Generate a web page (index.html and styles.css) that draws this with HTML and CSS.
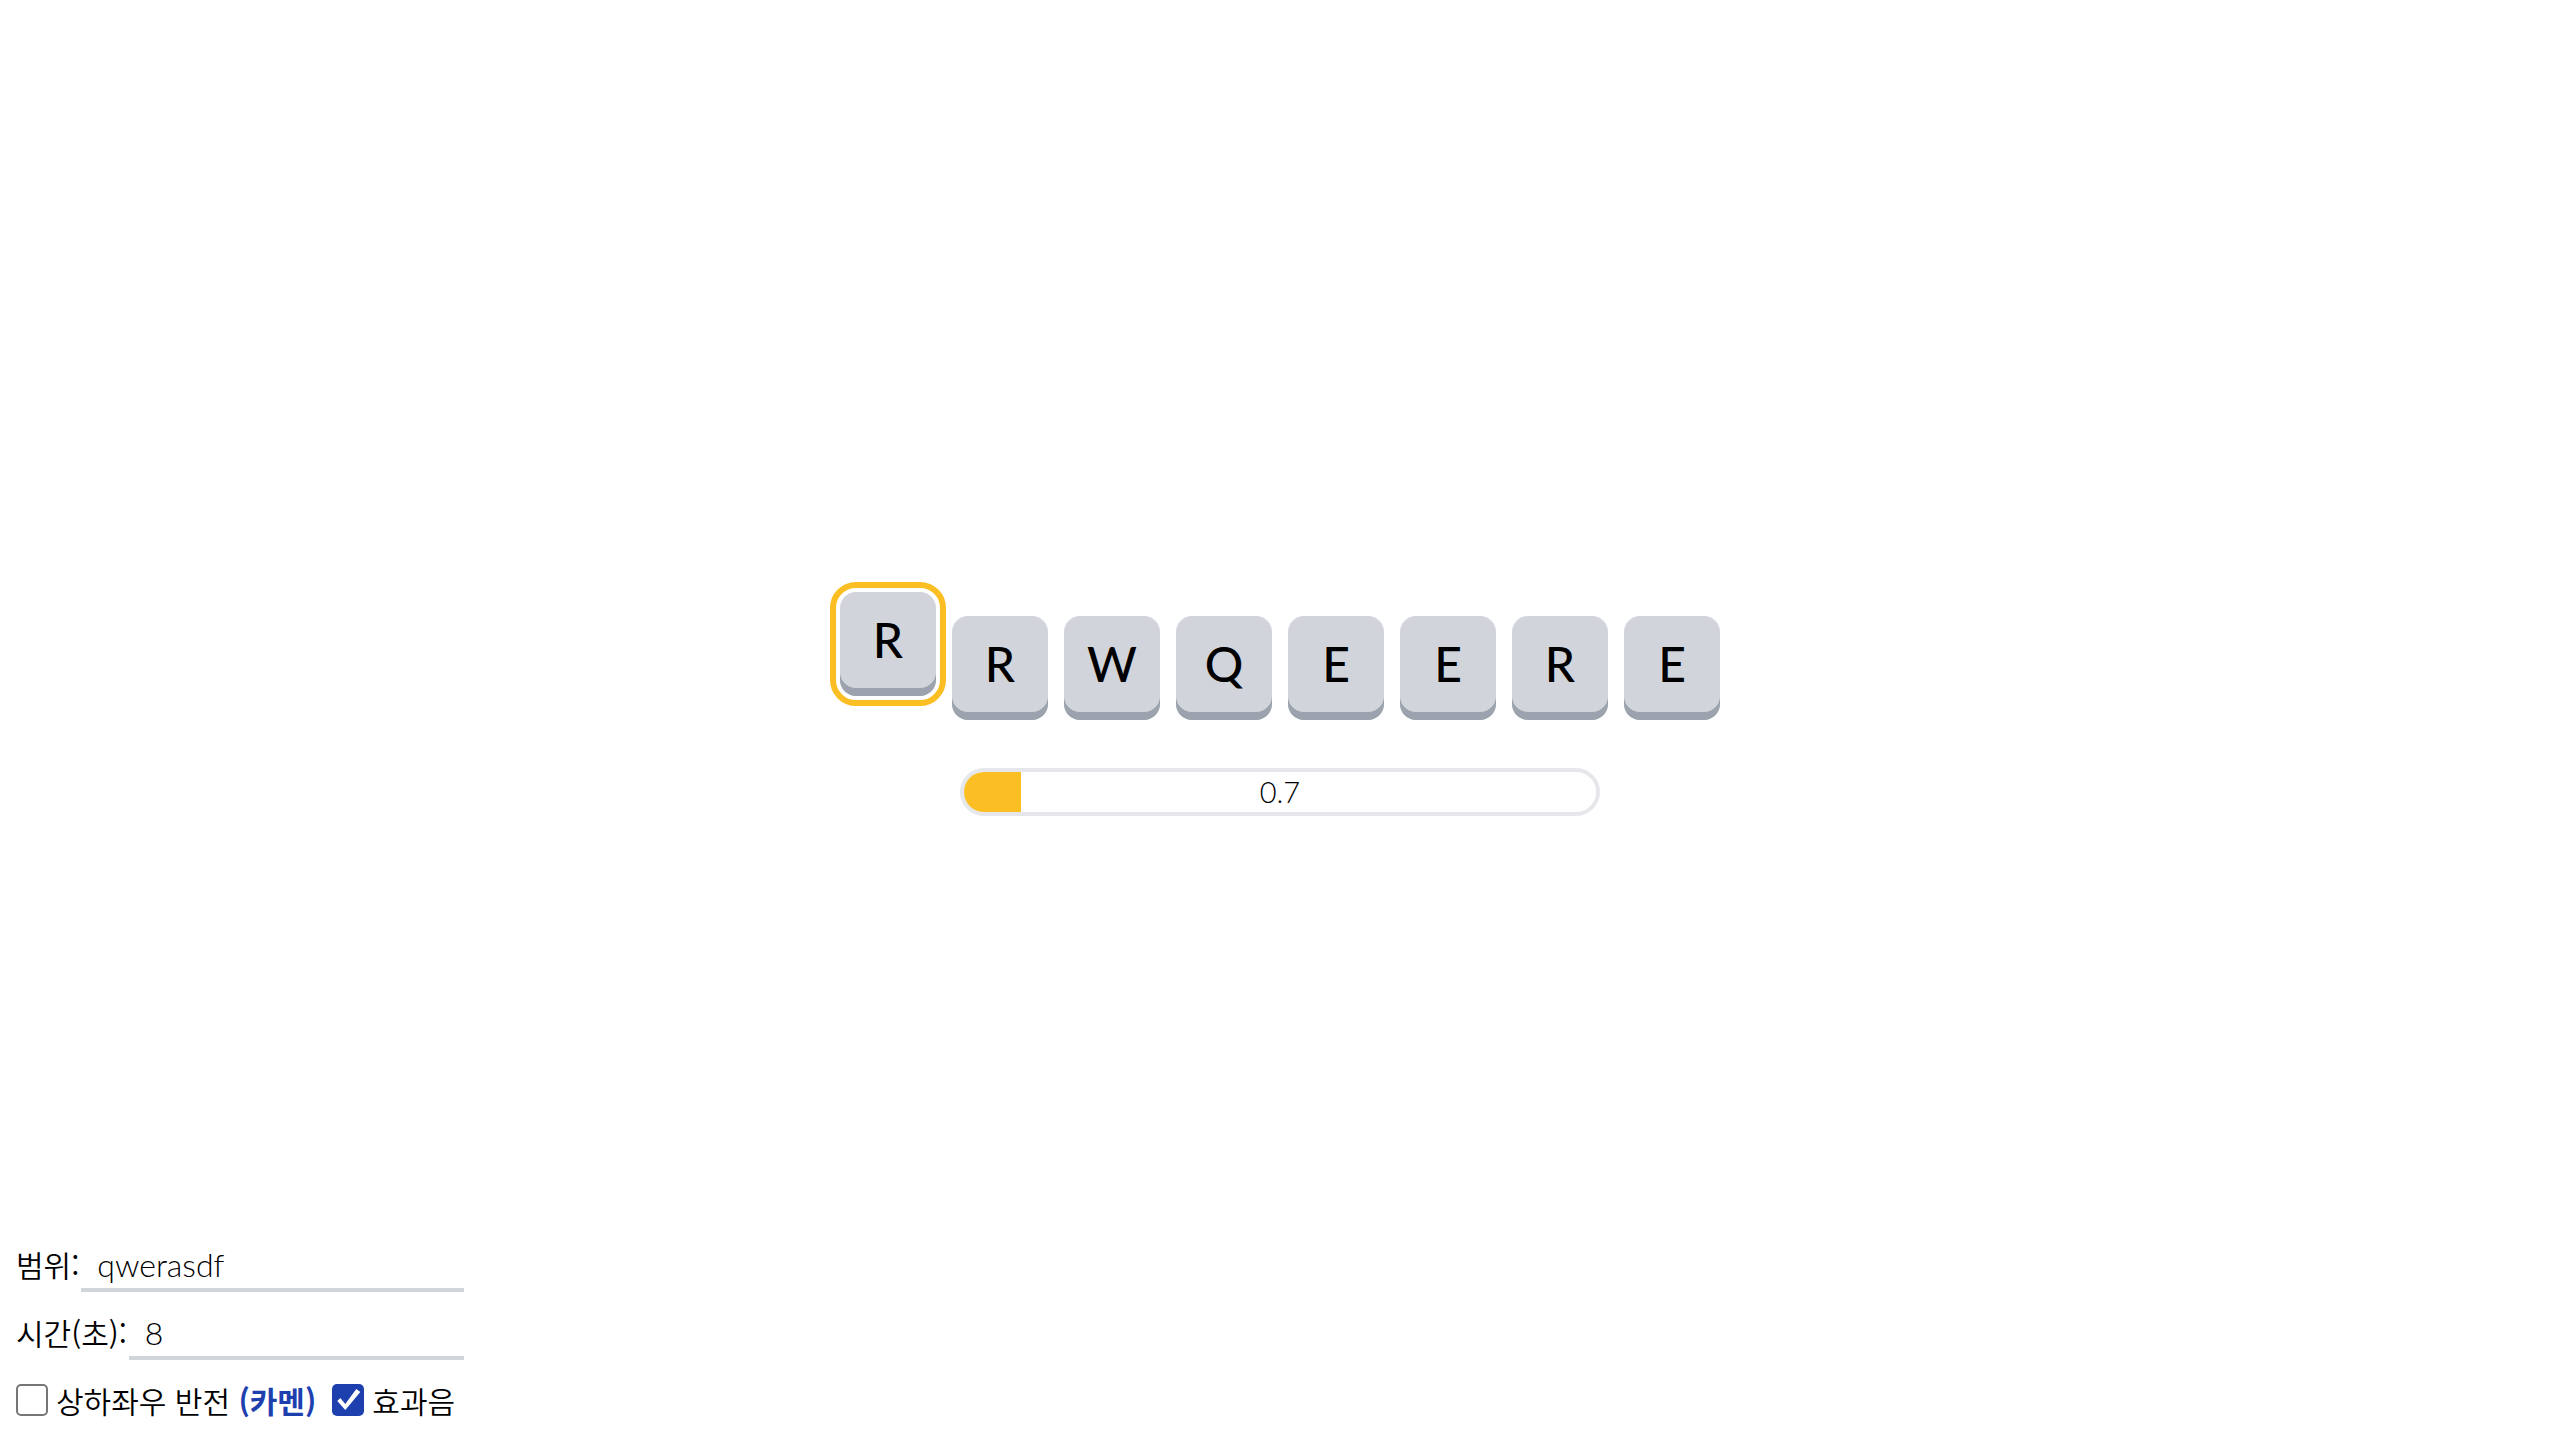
FILE: index.html
```html
<!DOCTYPE html>
<html lang="ko">
<head>
<meta charset="utf-8">
<meta name="viewport" content="width=device-width, initial-scale=1">
<title>키 입력 연습</title>
<link rel="stylesheet" href="styles.css">
</head>
<body>
<main class="stage">
  <div class="keys">
    <kbd class="key key-active">R</kbd>
    <kbd class="key">R</kbd>
    <kbd class="key">W</kbd>
    <kbd class="key">Q</kbd>
    <kbd class="key">E</kbd>
    <kbd class="key">E</kbd>
    <kbd class="key">R</kbd>
    <kbd class="key">E</kbd>
  </div>
  <div class="timer">
    <div class="timer-fill" style="width: 9%"></div>
    <span class="timer-text">0.7</span>
  </div>
</main>
<form class="settings">
  <div class="field">
    <label for="range">범위:</label>
    <input class="text-input" id="range" type="text" value="qwerasdf">
  </div>
  <div class="field">
    <label for="seconds">시간(초):</label>
    <input class="text-input" id="seconds" type="text" inputmode="numeric" value="8">
  </div>
  <div class="checks">
    <label class="check"><input class="box" type="checkbox"><span>상하좌우 반전 <strong class="accent">(카멘)</strong></span></label>
    <label class="check"><input class="box" type="checkbox" checked><span>효과음</span></label>
  </div>
</form>
</body>
</html>
```
FILE: styles.css
```css
* {
  box-sizing: border-box;
}

body {
  margin: 0;
  min-height: 100vh;
  display: grid;
  background: #fff;
  color: #000;
  font-family: Lato, sans-serif;
  font-size: 30px;
  font-weight: 300;
  line-height: 48px;
}

.stage,
.settings {
  grid-area: 1 / 1;
}

.stage {
  display: flex;
  flex-direction: column;
  align-items: center;
  justify-content: center;
  gap: 48px;
  padding-bottom: 8px;
}

.keys {
  display: flex;
  gap: 16px;
}

.key {
  width: 96px;
  height: 104px;
  padding-bottom: 8px;
  display: flex;
  align-items: center;
  justify-content: center;
  border-radius: 16px;
  background: #d1d5db;
  box-shadow: inset 0 -8px #9ca3af;
  font-family: Lato, sans-serif;
  font-size: 48px;
  font-weight: 500;
}

.key-active {
  transform: translateY(-24px);
  outline: 6px solid #fbbf24;
  outline-offset: 4px;
}

.timer {
  width: 640px;
  max-width: 100%;
  height: 48px;
  display: grid;
  overflow: hidden;
  border: 4px solid #e5e7eb;
  border-radius: 24px;
}

.timer-fill,
.timer-text {
  grid-area: 1 / 1;
}

.timer-fill {
  background: #fbbf24;
}

.timer-text {
  font-size: 29px;
  line-height: 40px;
  text-align: center;
}

.settings {
  align-self: end;
  justify-self: start;
  width: 480px;
  padding: 16px;
  display: flex;
  flex-direction: column;
  gap: 16px;
  font-family: "Noto Sans CJK KR", sans-serif;
  font-weight: 350;
}

.field {
  display: flex;
  gap: 2px;
}

.text-input {
  flex: 1;
  min-width: 0;
  height: 52px;
  padding: 0 16px;
  border: 0;
  border-bottom: 4px solid #d1d5db;
  background: transparent;
  color: inherit;
  font-family: Lato, "Noto Sans CJK KR", sans-serif;
  font-size: 32px;
  font-weight: 300;
}

.checks {
  display: flex;
  gap: 16px;
  white-space: nowrap;
}

.check {
  display: flex;
  align-items: center;
  gap: 8px;
}

.box {
  appearance: none;
  width: 32px;
  height: 32px;
  margin: 0;
  border: 2px solid #767676;
  border-radius: 5px;
  background: #fff;
}

.box:checked {
  border: 0;
  background: #1e40af;
}

.box:checked::before {
  content: "";
  display: block;
  height: 100%;
  background: #fff;
  clip-path: polygon(5px 17px, 8px 14px, 13px 20px, 24px 5px, 28px 8px, 13px 26px);
}

.accent {
  color: #1e40af;
  font-weight: 700;
}
```
